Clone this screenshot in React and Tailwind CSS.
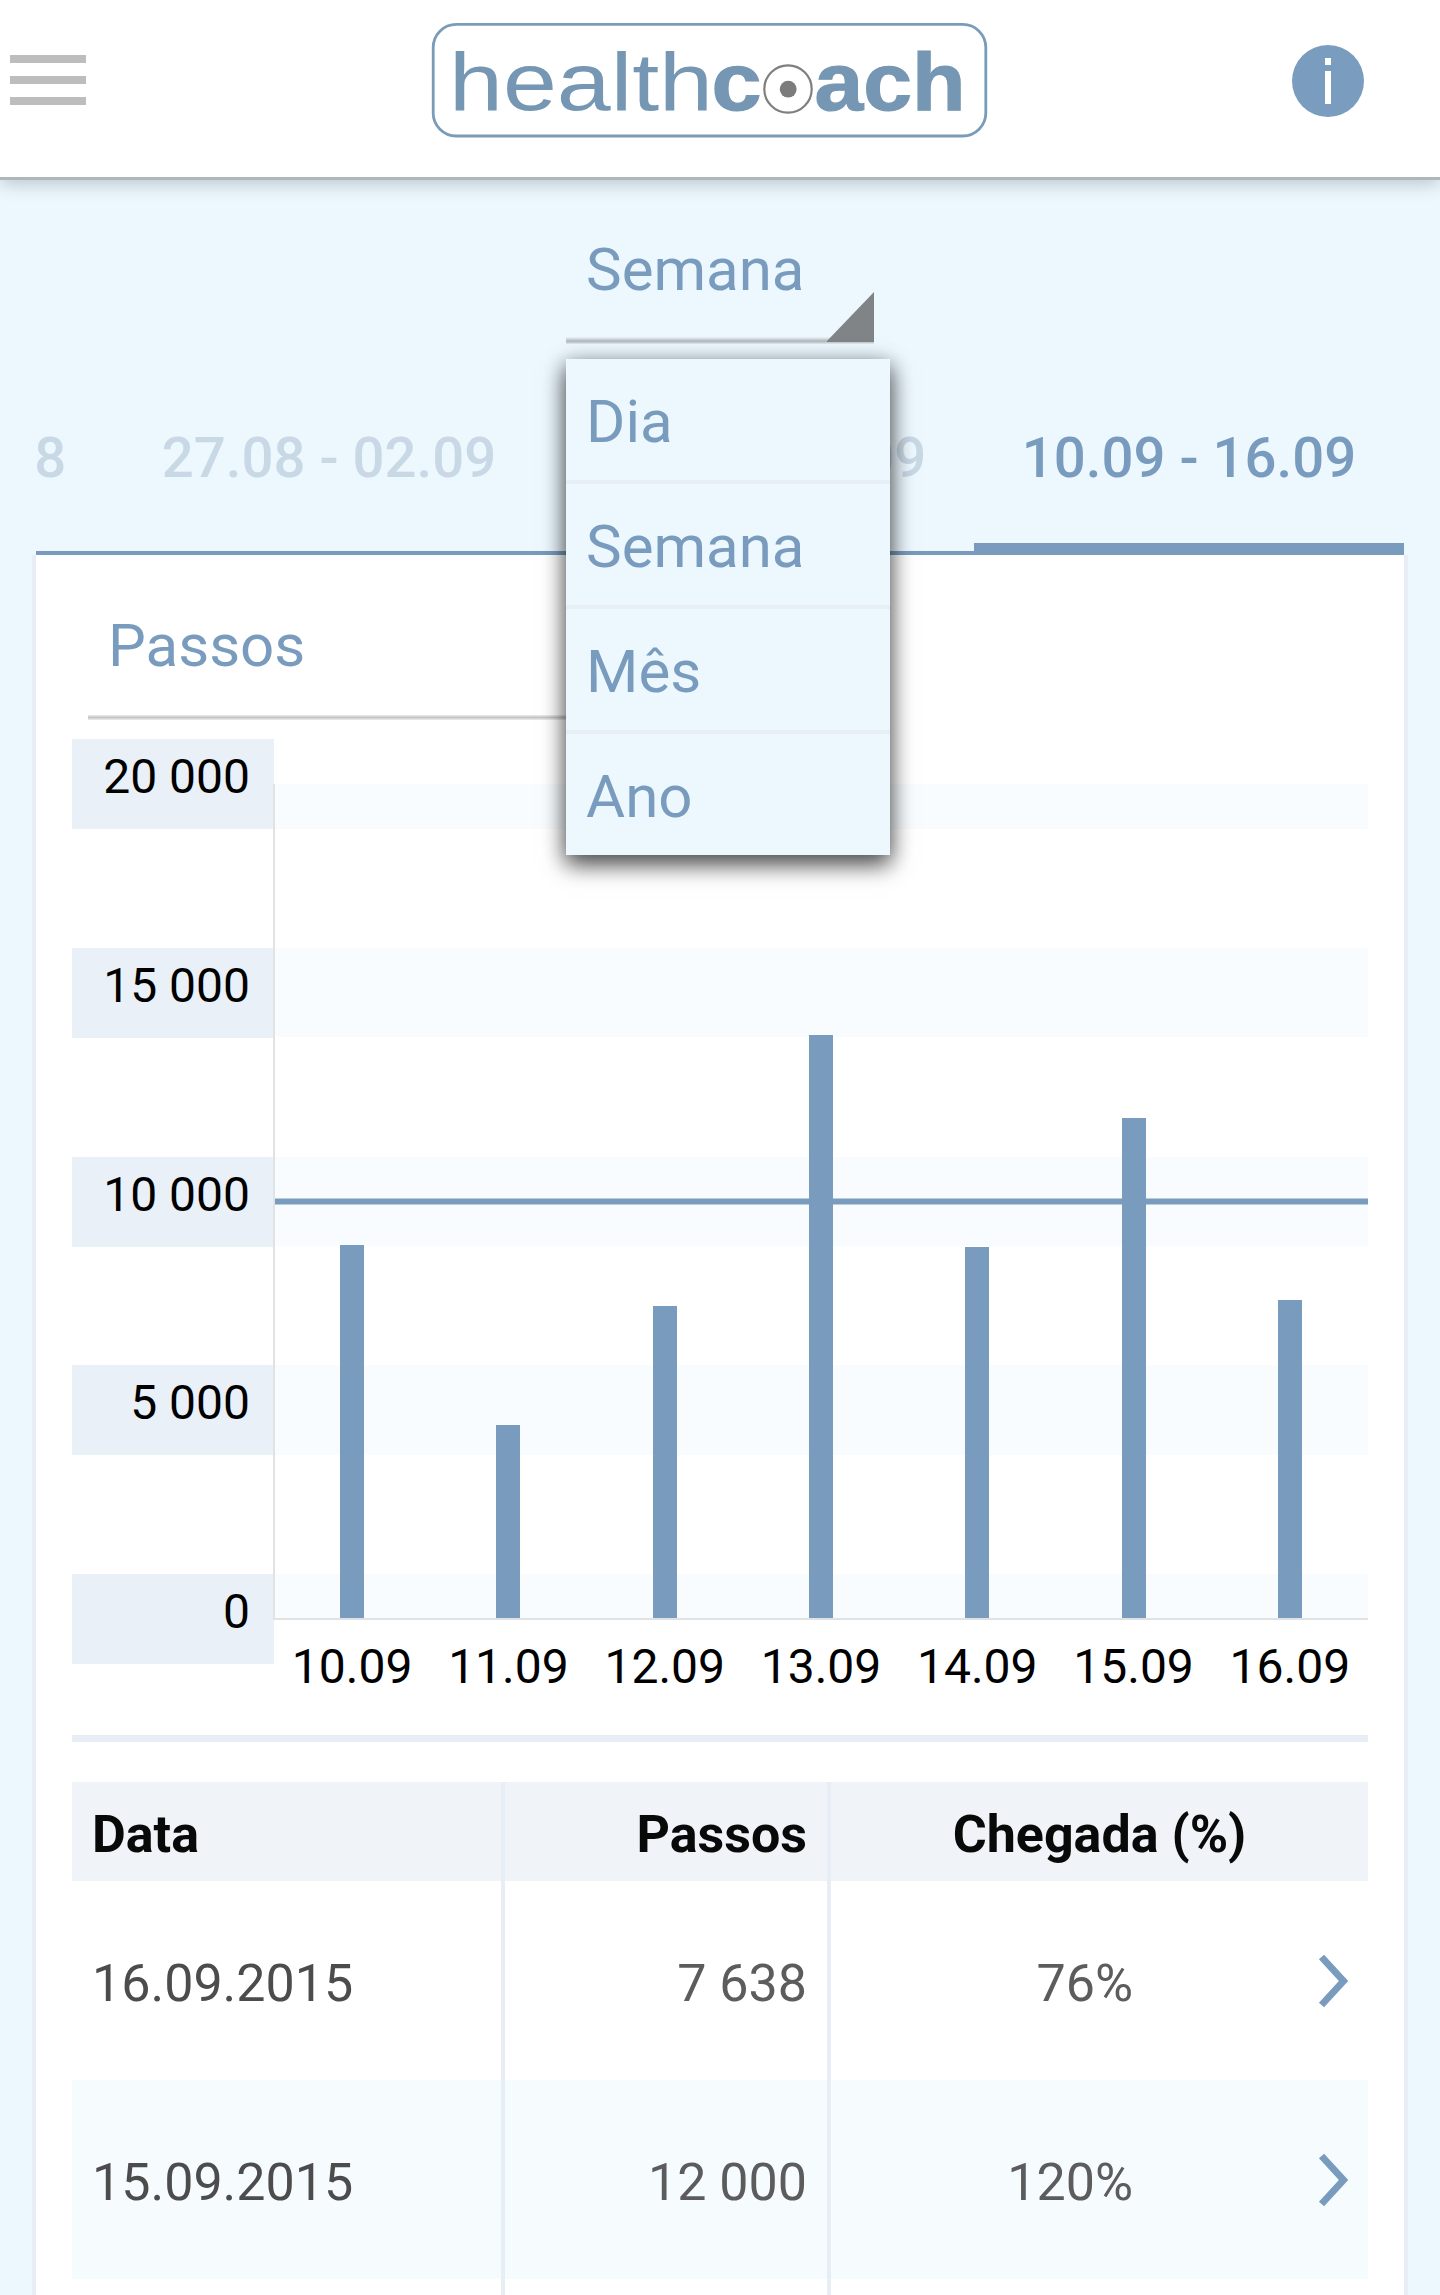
import React from "react";

const PERIODS = ["Dia", "Semana", "Mês", "Ano"];
const WEEKS = ["20.08 - 26.08", "27.08 - 02.09", "03.09 - 09.09", "10.09 - 16.09"];
const TICKS = ["20 000", "15 000", "10 000", "5 000", "0"];
const STEPS = [
  { day: "10.09", value: 8960 },
  { day: "11.09", value: 4640 },
  { day: "12.09", value: 7500 },
  { day: "13.09", value: 13985 },
  { day: "14.09", value: 8904 },
  { day: "15.09", value: 12000 },
  { day: "16.09", value: 7638 },
];
const ROWS = [
  { date: "16.09.2015", steps: "7 638", reached: "76%" },
  { date: "15.09.2015", steps: "12 000", reached: "120%" },
];

function Logo() {
  return (
    <svg className="block h-[116px] w-[558px]" viewBox="430 22 558 116">
      <rect x="433.2" y="24.4" width="552.6" height="111.6" rx="23" fill="none" stroke="#7a9cb9" strokeWidth="2.8" />
      <g fill="#7597b3" fontFamily="'Liberation Sans', Arial, sans-serif" fontSize="81">
        <text x="449" y="110" textLength="264" lengthAdjust="spacingAndGlyphs">health</text>
        <g fontWeight="700" stroke="#7597b3" strokeWidth="1.2">
          <text x="711.5" y="110" textLength="50" lengthAdjust="spacingAndGlyphs">c</text>
          <text x="814.5" y="110" textLength="151" lengthAdjust="spacingAndGlyphs">ach</text>
        </g>
      </g>
      <circle cx="788" cy="89" r="23.7" fill="none" stroke="#807f7e" strokeWidth="2.2" />
      <circle cx="788.2" cy="89.2" r="8.4" fill="#7c7c7d" />
    </svg>
  );
}

function Header() {
  return (
    <header className="relative z-10 flex h-[177px] items-start justify-between bg-white pl-2.5 pr-[76px] shadow-[0_3px_0_#afb7bb,0_6px_18px_rgba(0,0,0,0.22)]">
      <div className="mt-[55px] flex w-[76px] flex-col gap-[13px]">
        <span className="h-2 bg-[#bdbdbd]" />
        <span className="h-2 bg-[#bdbdbd]" />
        <span className="h-2 bg-[#bdbdbd]" />
      </div>
      <div className="mt-[22px] mr-[-40px]">
        <Logo />
      </div>
      <svg className="mt-[45px] block size-[72px]" viewBox="0 0 72 72">
        <circle cx="36" cy="36" r="36" fill="#7a9cbe" />
        <path d="M33 13h6v7h-6zM33 26h6v33h-6z" fill="#fff" />
      </svg>
    </header>
  );
}

function PeriodMenu() {
  return (
    <div className="relative ml-[566px] h-[167px] w-[308px]">
      <div className="pl-5 pt-[56px] text-[60px] leading-[74px] text-[#799bbe]">Semana</div>
      <svg className="absolute left-0 top-[109px] h-[60px] w-[308px]" viewBox="0 0 308 60">
        <defs>
          <linearGradient id="line" x1="0" y1="0" x2="0" y2="1">
            <stop offset="0" stopColor="#808080" stopOpacity="0" />
            <stop offset=".6" stopColor="#808080" stopOpacity=".55" />
            <stop offset="1" stopColor="#808080" stopOpacity=".1" />
          </linearGradient>
        </defs>
        <rect x="0" y="51" width="308" height="7" fill="url(#line)" />
        <path d="M261 55L308 6V56H261z" fill="#808486" />
      </svg>
      <ul className="absolute left-0 top-[182px] z-20 w-[324px] divide-y-4 divide-[#e8eef6] bg-[#ecf7fe] text-[60px] text-[#799bbe] shadow-[0_10px_22px_rgba(0,0,0,0.6),0_4px_20px_rgba(0,0,0,0.3)]">
        {PERIODS.map((p, i) => (
          <li key={p} className={i === PERIODS.length - 1 ? "h-[121px] pl-5 leading-[126px]" : "h-[125px] pl-5 leading-[126px]"}>
            {p}
          </li>
        ))}
      </ul>
    </div>
  );
}

function WeekTabs() {
  return (
    <div className="mx-9 flex h-[211px] justify-end overflow-hidden border-b-4 border-[#799bbe]">
      {WEEKS.map((w, i) => (
        <div
          key={w}
          className={
            i === 3
              ? "h-[207px] w-[430px] shrink-0 border-b-8 border-[#799bbe] pt-[76px] text-center text-[56.3px] font-medium leading-[76px] text-[#799bbe]"
              : "h-[207px] w-[430px] shrink-0 pt-[76px] text-center text-[56.3px] font-medium leading-[76px] text-[#c9d8e5]"
          }
        >
          {w}
        </div>
      ))}
    </div>
  );
}

function StepsChart() {
  const pitch = 1094 / 7;
  return (
    <div className="flex h-[925px]">
      <div className="flex w-[202px] flex-col justify-between">
        {TICKS.map((t) => (
          <div key={t} className="h-[90px] bg-[#e9f0f7] pr-6 text-right text-[48px] leading-[75px] text-black">
            {t}
          </div>
        ))}
      </div>
      <div className="w-[1094px] pt-[45px]">
        <svg className="block h-[836px] w-[1094px] overflow-visible" viewBox="0 0 1094 836">
          <g fill="#f8fcff">
            <rect width="1094" height="45" />
            <rect y="164" width="1094" height="89" />
            <rect y="373" width="1094" height="89" />
            <rect y="581" width="1094" height="90" />
            <rect y="790" width="1094" height="45" />
          </g>
          {STEPS.map((s, i) => {
            const h = Math.round((s.value / 20000) * 834.5);
            return <rect key={s.day} x={Math.round(pitch * (i + 0.5) - 12)} y={835 - h} width="24" height={h} fill="#799bbe" />;
          })}
          <rect y="414.5" width="1094" height="6" fill="#799bbe" />
          <path d="M0 0V835H1094" fill="none" stroke="#e0e2e4" strokeWidth="2" />
        </svg>
        <div className="grid grid-cols-7 pt-[9px] text-center text-[48px] leading-[76px] text-black">
          {STEPS.map((s) => (
            <span key={s.day}>{s.day}</span>
          ))}
        </div>
      </div>
    </div>
  );
}

function Chevron() {
  return (
    <svg className="block h-[54px] w-[30px]" viewBox="0 0 30 54">
      <path d="M3.5 3L25.5 27L3.5 51" fill="none" stroke="#799bbe" strokeWidth="7" />
    </svg>
  );
}

function StepsTable() {
  return (
    <div className="mt-10 text-[52px]">
      <div className="flex h-[99px] bg-[#f0f4f8] font-bold leading-[106px] text-[#080a0a]">
        <div className="w-[433px] border-r-4 border-[#e8eef6] pl-5">Data</div>
        <div className="w-[326px] border-r-4 border-[#e8eef6] pr-5 text-right">Passos</div>
        <div className="flex-1 text-center">Chegada (%)</div>
      </div>
      {[...ROWS, null].map((r, i) => (
        <div key={i} className={i === 1 ? "flex h-[199px] bg-[#f6fbfe] leading-[206px]" : "flex h-[199px] leading-[206px]"}>
          <div className="w-[433px] border-r-4 border-[#e8eef6] pl-5 text-[#4c4c4c]">{r?.date}</div>
          <div className="w-[326px] border-r-4 border-[#e8eef6] pr-5 text-right text-[#5c5c5c]">{r?.steps}</div>
          {r && (
            <div className="flex flex-1 items-start pr-5 text-[#5c5c5c]">
              <div className="w-[302px] text-right">{r.reached}</div>
              <div className="ml-auto mt-[73px]">
                <Chevron />
              </div>
            </div>
          )}
        </div>
      ))}
    </div>
  );
}

export default function App() {
  return (
    <div className="h-[2295px] w-[1440px] overflow-hidden bg-[#ecf7fe] font-['Roboto',sans-serif]">
      <Header />
      <PeriodMenu />
      <WeekTabs />
      <main className="mx-8 border-x-4 border-[#e8eef6] bg-white px-9">
        <div className="flex h-[184px] flex-col pl-4">
          <div className="pl-5 pt-[54px] text-[60px] leading-[74px] text-[#799bbe]">Passos</div>
          <div className="mt-[32px] h-[5px] w-[640px] bg-linear-to-b from-[#eeeeee] via-[#c4c4c4] to-[#eeeeee]" />
        </div>
        <StepsChart />
        <div className="mt-[71px] h-[7px] bg-[#e8eef6]" />
        <StepsTable />
      </main>
    </div>
  );
}
